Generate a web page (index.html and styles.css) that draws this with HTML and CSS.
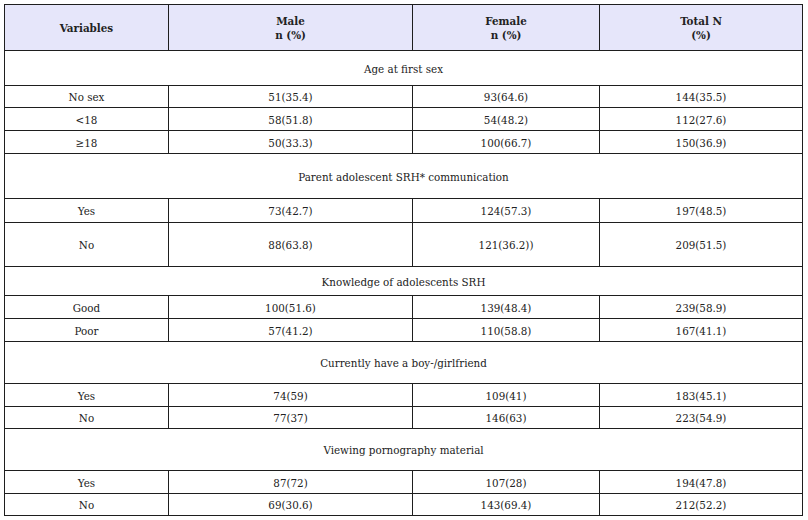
FILE: index.html
```html
<!DOCTYPE html>
<html>
<head>
<meta charset="utf-8">
<link rel="stylesheet" href="styles.css">
</head>
<body>
<table class="tbl">
  <colgroup>
    <col class="c1"><col class="c2"><col class="c3"><col class="c4">
  </colgroup>
  <thead>
    <tr class="h-head">
      <th>Variables</th>
      <th>Male<br>n (%)</th>
      <th>Female<br>n (%)</th>
      <th>Total N<br>(%)</th>
    </tr>
  </thead>
  <tbody>
    <tr class="h35"><td colspan="4">Age at first sex</td></tr>
    <tr class="h22"><td>No sex</td><td>51(35.4)</td><td>93(64.6)</td><td>144(35.5)</td></tr>
    <tr class="h23"><td>&lt;18</td><td>58(51.8)</td><td>54(48.2)</td><td>112(27.6)</td></tr>
    <tr class="h23"><td>≥18</td><td>50(33.3)</td><td>100(66.7)</td><td>150(36.9)</td></tr>
    <tr class="h45"><td colspan="4">Parent adolescent SRH* communication</td></tr>
    <tr class="h24"><td>Yes</td><td>73(42.7)</td><td>124(57.3)</td><td>197(48.5)</td></tr>
    <tr class="h44"><td>No</td><td>88(63.8)</td><td>121(36.2))</td><td>209(51.5)</td></tr>
    <tr class="h29"><td colspan="4">Knowledge of adolescents SRH</td></tr>
    <tr class="h23"><td>Good</td><td>100(51.6)</td><td>139(48.4)</td><td>239(58.9)</td></tr>
    <tr class="h23"><td>Poor</td><td>57(41.2)</td><td>110(58.8)</td><td>167(41.1)</td></tr>
    <tr class="h42"><td colspan="4">Currently have a boy-/girlfriend</td></tr>
    <tr class="h23"><td>Yes</td><td>74(59)</td><td>109(41)</td><td>183(45.1)</td></tr>
    <tr class="h22"><td>No</td><td>77(37)</td><td>146(63)</td><td>223(54.9)</td></tr>
    <tr class="h42"><td colspan="4">Viewing pornography material</td></tr>
    <tr class="h23"><td>Yes</td><td>87(72)</td><td>107(28)</td><td>194(47.8)</td></tr>
    <tr class="h22"><td>No</td><td>69(30.6)</td><td>143(69.4)</td><td>212(52.2)</td></tr>
  </tbody>
</table>
</body>
</html>
```
FILE: styles.css
```css
html, body {
  margin: 0;
  padding: 0;
  background: #ffffff;
}
body {
  padding: 4px;
  font-family: "DejaVu Serif Condensed", "DejaVu Serif", serif;
  font-size: 11.5px;
  color: #222222;
}
.tbl {
  border-collapse: collapse;
  table-layout: fixed;
  width: 798px;
}
.c1 { width: 164px; }
.c2 { width: 244px; }
.c3 { width: 187px; }
.c4 { width: 203px; }
.tbl th, .tbl td {
  border: 1px solid #1e1e1e;
  padding: 0;
  text-align: center;
  vertical-align: middle;
  line-height: 14px;
}
.tbl td {
  padding-top: 1px;
}
.tbl th {
  background: #e6e6fa;
  font-weight: bold;
}
.h-head { height: 46px; }
.h22 { height: 22px; }
.h23 { height: 23px; }
.h24 { height: 24px; }
.h29 { height: 29px; }
.h35 { height: 35px; }
.h42 { height: 42px; }
.h44 { height: 44px; }
.h45 { height: 45px; }
```
